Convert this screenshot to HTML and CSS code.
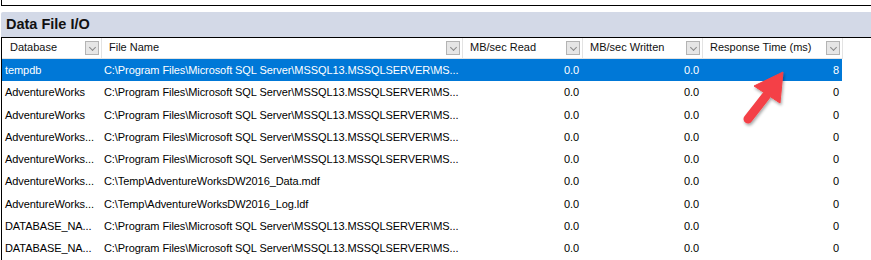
FILE: index.html
```html
<!DOCTYPE html>
<html lang="en">
<head>
    <meta charset="UTF-8">
    <title>Data File I/O</title>
    <link rel="stylesheet" href="styles.css">
</head>
<body>
    <div class="top-box"></div>
    <div class="panel">
        <div class="panel-title">Data File I/O</div>
        <div class="grid">
            <div class="row head">
                <div class="hcell">Database<span class="dd"></span></div>
                <div class="hcell">File Name<span class="dd"></span></div>
                <div class="hcell">MB/sec Read<span class="dd"></span></div>
                <div class="hcell">MB/sec Written<span class="dd"></span></div>
                <div class="hcell">Response Time (ms)<span class="dd"></span></div>
            </div>
            <div class="row selected">
                <div class="cell">tempdb</div>
                <div class="cell">C:\Program Files\Microsoft SQL Server\MSSQL13.MSSQLSERVER\MS...</div>
                <div class="cell num">0.0</div>
                <div class="cell num">0.0</div>
                <div class="cell num">8</div>
            </div>
            <div class="row">
                <div class="cell">AdventureWorks</div>
                <div class="cell">C:\Program Files\Microsoft SQL Server\MSSQL13.MSSQLSERVER\MS...</div>
                <div class="cell num">0.0</div>
                <div class="cell num">0.0</div>
                <div class="cell num">0</div>
            </div>
            <div class="row">
                <div class="cell">AdventureWorks</div>
                <div class="cell">C:\Program Files\Microsoft SQL Server\MSSQL13.MSSQLSERVER\MS...</div>
                <div class="cell num">0.0</div>
                <div class="cell num">0.0</div>
                <div class="cell num">0</div>
            </div>
            <div class="row">
                <div class="cell">AdventureWorks...</div>
                <div class="cell">C:\Program Files\Microsoft SQL Server\MSSQL13.MSSQLSERVER\MS...</div>
                <div class="cell num">0.0</div>
                <div class="cell num">0.0</div>
                <div class="cell num">0</div>
            </div>
            <div class="row">
                <div class="cell">AdventureWorks...</div>
                <div class="cell">C:\Program Files\Microsoft SQL Server\MSSQL13.MSSQLSERVER\MS...</div>
                <div class="cell num">0.0</div>
                <div class="cell num">0.0</div>
                <div class="cell num">0</div>
            </div>
            <div class="row">
                <div class="cell">AdventureWorks...</div>
                <div class="cell">C:\Temp\AdventureWorksDW2016_Data.mdf</div>
                <div class="cell num">0.0</div>
                <div class="cell num">0.0</div>
                <div class="cell num">0</div>
            </div>
            <div class="row">
                <div class="cell">AdventureWorks...</div>
                <div class="cell">C:\Temp\AdventureWorksDW2016_Log.ldf</div>
                <div class="cell num">0.0</div>
                <div class="cell num">0.0</div>
                <div class="cell num">0</div>
            </div>
            <div class="row">
                <div class="cell">DATABASE_NA...</div>
                <div class="cell">C:\Program Files\Microsoft SQL Server\MSSQL13.MSSQLSERVER\MS...</div>
                <div class="cell num">0.0</div>
                <div class="cell num">0.0</div>
                <div class="cell num">0</div>
            </div>
            <div class="row">
                <div class="cell">DATABASE_NA...</div>
                <div class="cell">C:\Program Files\Microsoft SQL Server\MSSQL13.MSSQLSERVER\MS...</div>
                <div class="cell num">0.0</div>
                <div class="cell num">0.0</div>
                <div class="cell num">0</div>
            </div>
        </div>

        <!-- red callout arrow -->
        <svg class="arrow" width="60" height="70" viewBox="730 60 60 70">
            <defs>
                <filter id="shadow" x="-30%" y="-30%" width="160%" height="160%">
                    <feDropShadow dx="1" dy="2" stdDeviation="1.5" flood-color="#000" flood-opacity="0.35"/>
                </filter>
            </defs>
            <g filter="url(#shadow)" fill="#f44146" stroke="#f44146">
                <line x1="766" y1="96" x2="748" y2="119" stroke-width="9" stroke-linecap="round"/>
                <polygon points="783,72 754,86 780,103" stroke-width="1" stroke-linejoin="round"/>
            </g>
        </svg>
    </div>
</body>
</html>
```

FILE: styles.css
```css
body {
    margin: 0;
    background: #ffffff;
    font-family: "Liberation Sans", Arial, sans-serif;
    font-size: 11px;
    color: #000;
    overflow: hidden;
}
.top-box {
    height: 5px;
    margin-left: 1px;
    border-left: 1px solid #000;
    border-bottom: 1px solid #000;
}
.panel {
    position: relative;
    margin-top: 6px;
}
.panel-title {
    height: 25px;
    margin-left: 1px;
    padding-left: 5px;
    background-color: #d3d9e7;
    border-top-left-radius: 2px;
    font-weight: bold;
    font-size: 14.5px;
    line-height: 25px;
    color: #111;
    border-bottom: 1px solid #000;
}
.grid {
    margin-left: 1px;
    border-left: 1px solid #000;
    height: 230px;
}
.row {
    display: grid;
    grid-template-columns: 100px 361px 120px 120px 139px;
    height: 22.25px;
    line-height: 22px;
    white-space: nowrap;
}
.row.head {
    height: 20px;
    line-height: 19px;
    width: 840px;
    border-bottom: 1px solid #e3e3e3;
    border-right: 1px solid #e3e3e3;
}
.hcell {
    position: relative;
    padding-left: 8px;
    border-right: 1px solid #e3e3e3;
    color: #111;
}
.hcell + .hcell {
    padding-left: 7px;
}
.hcell:last-child {
    border-right: none;
}
.dd {
    position: absolute;
    right: 2px;
    top: 3px;
    width: 12px;
    height: 12px;
    border: 1px solid #b4b4b4;
    background: #e6e6e6;
}
.dd::after {
    content: "";
    position: absolute;
    left: 3.5px;
    top: 2.5px;
    width: 4px;
    height: 4px;
    border-right: 1px solid #8a8a8a;
    border-bottom: 1px solid #8a8a8a;
    transform: rotate(45deg);
}
.cell {
    padding-left: 3px;
    overflow: hidden;
    letter-spacing: -0.08px;
}
.cell + .cell {
    padding-left: 2px;
}
.cell.num {
    text-align: right;
    padding-right: 4px;
}
.cell.num:last-child {
    padding-right: 3px;
}
.row.selected {
    width: 840px;
    background-color: #0078d7;
    color: #fff;
}
.arrow {
    position: absolute;
    left: 730px;
    top: 48px;
    overflow: visible;
}
```
